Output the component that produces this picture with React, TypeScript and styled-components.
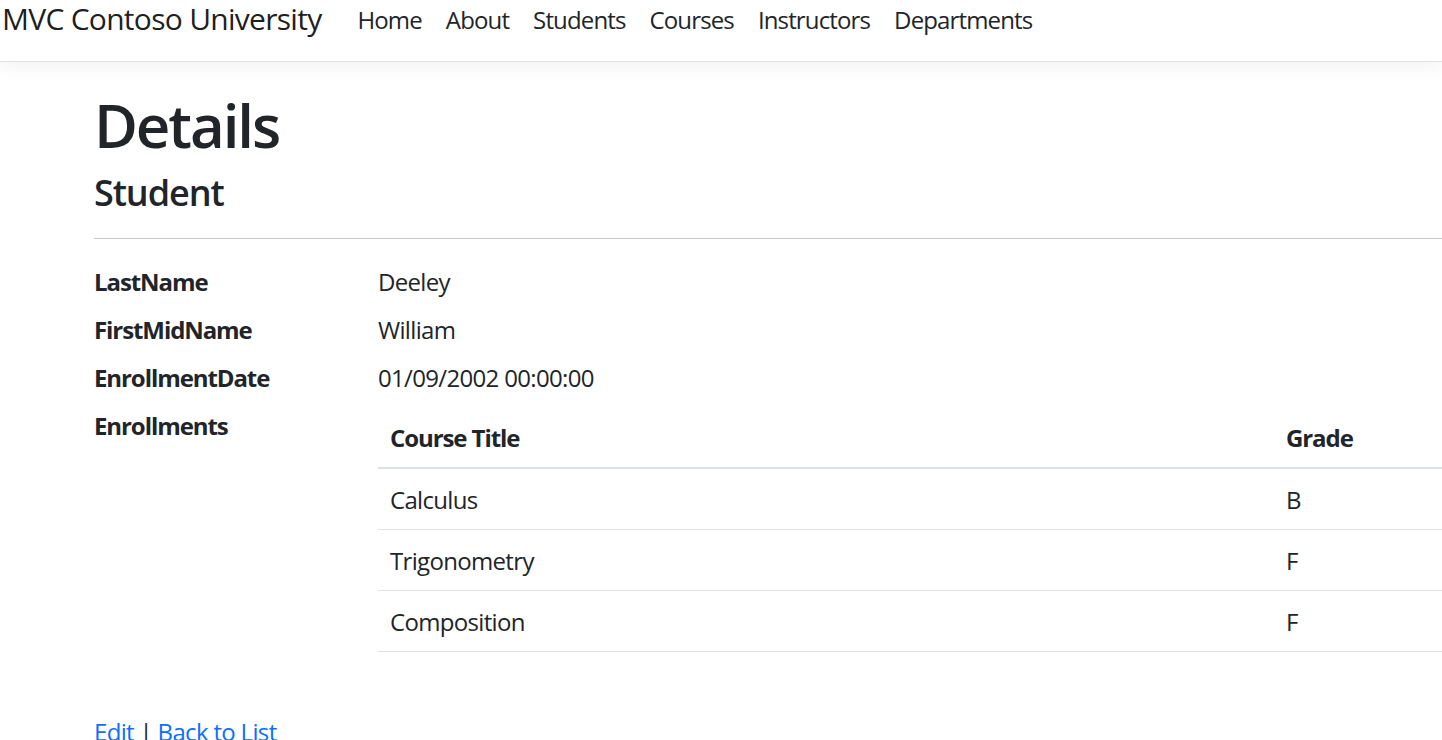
import React from 'react';
import styled, { createGlobalStyle } from 'styled-components';

const GlobalStyle = createGlobalStyle`
  html, body {
    margin: 0;
    padding: 0;
    background: #fff;
    overflow: hidden;
  }
  body {
    font-family: "Open Sans", "Noto Sans", sans-serif;
    font-size: 24px;
    line-height: 1.5;
    letter-spacing: -0.028em;
    color: #212529;
  }
`;

const Navbar = styled.header`
  display: flex;
  align-items: flex-start;
  height: 61px;
  border-bottom: 1px solid #dee2e6;
  box-shadow: 0 6px 18px rgba(0, 0, 0, 0.05);
  padding-left: 2px;
`;

const Brand = styled.a`
  font-size: 30px;
  line-height: 37px;
  letter-spacing: -0.024em;
  color: rgba(0, 0, 0, 0.9);
  text-decoration: none;
  margin-right: 24px;
  white-space: nowrap;
`;

const NavList = styled.ul`
  display: flex;
  list-style: none;
  margin: 0;
  padding: 0;
`;

const NavLink = styled.a`
  display: block;
  padding: 0 12px;
  font-size: 24px;
  line-height: 39px;
  letter-spacing: -0.036em;
  color: #212529;
  text-decoration: none;
`;

const Main = styled.main`
  padding: 27px 0 0 94px;
`;

const Title = styled.h1`
  margin: 0 0 10px;
  font-size: 60px;
  font-weight: 600;
  line-height: 72px;
  letter-spacing: -0.035em;
`;

const SubTitle = styled.h4`
  margin: 0;
  font-size: 36px;
  font-weight: 600;
  line-height: 43px;
  letter-spacing: -0.03em;
`;

const Rule = styled.hr`
  margin: 24px 0 25px;
  border: 0;
  border-top: 1px solid #c8c9ca;
`;

const DetailList = styled.dl`
  display: grid;
  grid-template-columns: 284px 1fr;
  margin: 0 0 26px;
`;

const Term = styled.dt`
  font-weight: 700;
  letter-spacing: -0.045em;
  margin: 0 0 12px;
`;

const Value = styled.dd`
  margin: 0 0 12px;
`;

const Table = styled.table`
  width: 100%;
  table-layout: fixed;
  border-collapse: collapse;
  margin-bottom: 24px;
`;

const Column = styled.col<{ $w?: number }>`
  width: ${p => (p.$w ? `${p.$w}px` : 'auto')};
`;

const HeadCell = styled.th`
  text-align: left;
  font-weight: 700;
  letter-spacing: -0.045em;
  padding: 12px 12px 11px;
  border-bottom: 2px solid #dee2e6;
`;

const Cell = styled.td`
  padding: 13px 12px 11px;
  border-bottom: 1px solid #dee2e6;
`;

const Footer = styled.div`
  line-height: 36px;
`;

const Link = styled.a`
  color: #0d6efd;
  text-decoration: none;
`;

const enrollments = [
  { title: 'Calculus', grade: 'B' },
  { title: 'Trigonometry', grade: 'F' },
  { title: 'Composition', grade: 'F' },
];

export default function App() {
  return (
    <>
      <GlobalStyle />
      <Navbar>
        <Brand href="#">MVC Contoso University</Brand>
        <NavList>
          {['Home', 'About', 'Students', 'Courses', 'Instructors', 'Departments'].map(item => (
            <li key={item}>
              <NavLink href="#">{item}</NavLink>
            </li>
          ))}
        </NavList>
      </Navbar>
      <Main>
        <Title>Details</Title>
        <SubTitle>Student</SubTitle>
        <Rule />
        <DetailList>
          <Term>LastName</Term>
          <Value>Deeley</Value>
          <Term>FirstMidName</Term>
          <Value>William</Value>
          <Term>EnrollmentDate</Term>
          <Value>01/09/2002 00:00:00</Value>
          <Term>Enrollments</Term>
          <Value>
            <Table>
              <colgroup>
                <Column $w={896} />
                <Column />
              </colgroup>
              <thead>
                <tr>
                  <HeadCell>Course Title</HeadCell>
                  <HeadCell>Grade</HeadCell>
                </tr>
              </thead>
              <tbody>
                {enrollments.map(e => (
                  <tr key={e.title}>
                    <Cell>{e.title}</Cell>
                    <Cell>{e.grade}</Cell>
                  </tr>
                ))}
              </tbody>
            </Table>
          </Value>
        </DetailList>
        <Footer>
          <Link href="#">Edit</Link> | <Link href="#">Back to List</Link>
        </Footer>
      </Main>
    </>
  );
}
